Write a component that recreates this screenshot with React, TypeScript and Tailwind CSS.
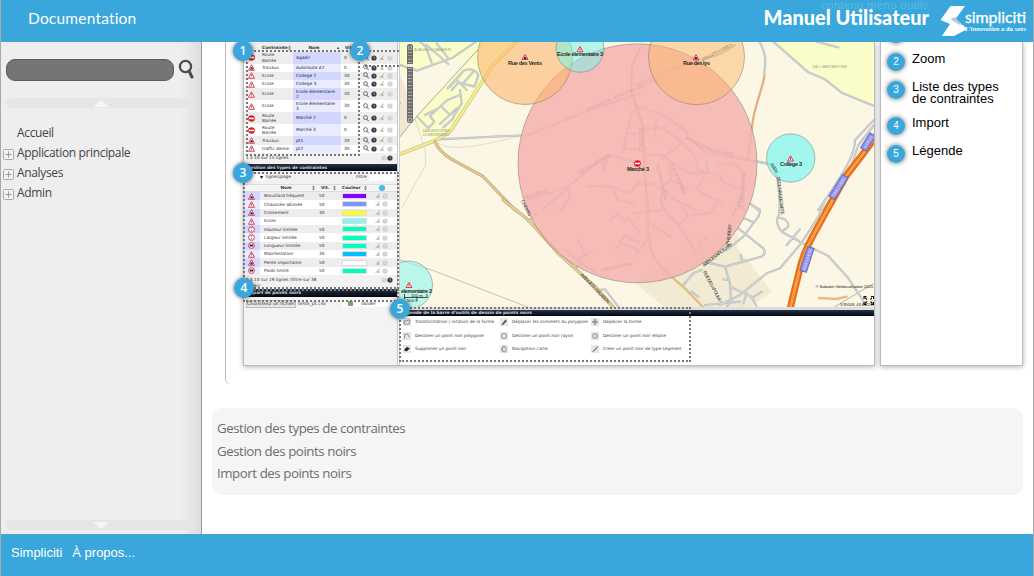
import React from "react";

type Kind = "stop" | "work" | "warn" | "limit" | "weight";

function SignIcon({ kind }: { kind: Kind }) {
  if (kind === "stop")
    return (
      <svg width="7" height="7" viewBox="0 0 14 14" className="shrink-0">
        <circle cx="7" cy="7" r="6.6" fill="#dc1c26" />
        <rect x="2" y="5.4" width="10" height="3" fill="#fff" />
      </svg>
    );
  if (kind === "limit" || kind === "weight")
    return (
      <svg width="7" height="7" viewBox="0 0 14 14" className="shrink-0">
        <circle cx="7" cy="7" r="5.8" fill="#fff" stroke="#d8283c" strokeWidth="1.8" />
        {kind === "limit" ? (
          <path d="M5 3.5h4L7 5.6zM5 10.5h4L7 8.4z" fill="#333" />
        ) : (
          <path d="M3.5 5h7v4h-7z" fill="#333" />
        )}
      </svg>
    );
  return (
    <svg width="7" height="7" viewBox="0 0 14 14" className="shrink-0">
      <path d="M7 1.4 13 12.6H1z" fill="#fff" stroke="#d8283c" strokeWidth="1.7" strokeLinejoin="round" />
      {kind === "work" ? <path d="M4.4 11 6 6l3 1.6 1 3.4z" fill="#222" /> : <path d="M7 5v3.6M7 9.6v1.4" stroke="#a02030" strokeWidth="1.5" />}
    </svg>
  );
}

function Gear({ dark }: { dark?: boolean }) {
  return (
    <svg width="6" height="6" viewBox="0 0 12 12" className="shrink-0">
      <circle cx="6" cy="6" r="5.2" fill={dark ? "#3c3c3c" : "#cfcfcf"} />
      <path d="M6 2.6V6l2.4 1.5" fill="none" stroke={dark ? "#bbb" : "#f4f4f4"} strokeWidth="1.3" />
    </svg>
  );
}

function Pen() {
  return (
    <svg width="6" height="6" viewBox="0 0 12 12" className="shrink-0">
      <path d="M9 1 5 7" stroke="#d9ad55" strokeWidth="2" />
      <path d="M1 9.5c3-4 5 1 9-2M6 5v5" stroke="#9b9b9b" strokeWidth="1.4" fill="none" />
    </svg>
  );
}

function Loupe() {
  return (
    <svg width="6" height="7" viewBox="0 0 12 14" className="shrink-0">
      <circle cx="5" cy="5.2" r="3.9" fill="none" stroke="#444" strokeWidth="1.5" />
      <path d="m8 8.5 3.4 4" stroke="#444" strokeWidth="2" />
    </svg>
  );
}

function Sort() {
  return (
    <svg width="3" height="6" viewBox="0 0 6 12" className="shrink-0">
      <path d="M3 1 5.6 5H.4zM3 11 .4 7h5.2z" fill="#666" />
    </svg>
  );
}

function BlackBar({ children }: { children: React.ReactNode }) {
  return (
    <div className="h-[7.5px] shrink-0 overflow-hidden bg-linear-to-b from-[#27344a] to-[#03070f] pl-[3px] text-[4.3px] leading-[7px] font-bold whitespace-nowrap text-[#d4d4d8]">
      {children}
    </div>
  );
}

const constraints: { k: Kind; c: string; n: string; v: string; tall?: boolean }[] = [
  { k: "stop", c: "Route Barrée", n: "Agadir", v: "0", tall: true },
  { k: "work", c: "Travaux", n: "Autoroute A7", v: "0" },
  { k: "warn", c: "Ecole", n: "College 2", v: "30" },
  { k: "warn", c: "Ecole", n: "College 3", v: "30" },
  { k: "warn", c: "Ecole", n: "Ecole élementaire 2", v: "30", tall: true },
  { k: "warn", c: "Ecole", n: "Ecole élementaire 3", v: "30", tall: true },
  { k: "stop", c: "Route Barrée", n: "Marché 2", v: "0", tall: true },
  { k: "stop", c: "Route Barrée", n: "Marché 3", v: "0", tall: true },
  { k: "work", c: "Travaux", n: "pt1", v: "30" },
  { k: "warn", c: "traffic dense", n: "pt2", v: "30" },
];

const types: { k: Kind; n: string; v: string; color: string }[] = [
  { k: "work", n: "Brouillard fréquent", v: "50", color: "bg-[#8400ff]" },
  { k: "warn", n: "Chaussée abîmée", v: "50", color: "bg-[#8494ff]" },
  { k: "work", n: "Croisement", v: "30", color: "bg-[#f8ff24]" },
  { k: "warn", n: "Ecole", v: "", color: "bg-[#84f7f1]" },
  { k: "limit", n: "Hauteur limitée", v: "50", color: "bg-[#00ffbf]" },
  { k: "limit", n: "Largeur limitée", v: "50", color: "bg-[#00ffbf]" },
  { k: "weight", n: "Longueur limitée", v: "50", color: "bg-[#00ffbf]" },
  { k: "warn", n: "Manifestation", v: "30", color: "bg-[#00bfff]" },
  { k: "work", n: "Pente importante", v: "50", color: "bg-white" },
  { k: "weight", n: "Poids limité", v: "50", color: "bg-[#00ffbf]" },
];

function Tables() {
  return (
    <div className="flex h-[323px] w-[154px] shrink-0 flex-col overflow-hidden border-r border-[#c4c4c4] bg-[#f3f3f3] font-['DejaVu_Sans',sans-serif] text-[4.3px] leading-[5.6px] text-[#333]">
      <div className="flex h-[9.5px] shrink-0 items-center bg-[#efefef] pt-[2px] font-bold">
        <span className="w-[18px]" />
        <span className="w-[26px]">Contrainte</span>
        <Sort />
        <span className="w-[46px] text-center">Nom</span>
        <span className="w-[8px]">▴</span>
        <span>Vit.</span>
      </div>
      {constraints.map((r, i) => (
        <div key={i} className={`flex shrink-0 items-center ${r.tall ? "h-[12px]" : "h-[8.25px]"} ${i % 2 ? "bg-white" : "bg-[#ededed]"}`}>
          <span className="flex w-[18px] pl-[4px]"><SignIcon kind={r.k} /></span>
          <span className="w-[31px] pr-[1px]"><span className={`block ${r.c === "Route Barrée" ? "w-[16px]" : "whitespace-nowrap"}`}>{r.c}</span></span>
          <span className={`flex h-full w-[48px] items-center pl-[3px] text-[#223] ${i % 2 ? "bg-[#eaebff]" : "bg-[#d3d6ff]"}`}>
            <span className="block w-[42px]">{r.n}</span>
          </span>
          <span className="w-[22px] pl-[3px]">{r.v}</span>
          <span className="flex items-center gap-[2px]"><Loupe /><Gear dark /><Pen /><Gear /></span>
        </div>
      ))}
      <div className="flex h-[10.75px] shrink-0 items-center justify-between bg-[#f1f1f1] pr-[4px] pl-[2px]">
        <span>1 à 10 sur 15 lignes</span>
        <span className="flex"><Gear /><Gear dark /></span>
      </div>
      <BlackBar>Gestion des types de contraintes</BlackBar>
      <div className="flex h-[12.5px] shrink-0 items-center bg-[#f1f1f1]">
        <span className="flex h-[7px] w-[21px] items-center justify-end bg-white pr-[2px] text-[6px] text-black">▾</span>
        <span className="ml-[1px] w-[90px]">lignes/page</span>
        <span className="w-[13px]">Filtre</span>
        <span className="h-[7px] w-[26px] bg-white" />
      </div>
      <div className="flex h-[8.5px] shrink-0 items-center border-y-[0.5px] border-[#ddd] bg-[#f4f4f4] font-bold">
        <span className="w-[16px]" />
        <span className="w-[52px] text-center">Nom</span>
        <Sort />
        <span className="ml-[6px] w-[12px]">Vit.</span>
        <Sort />
        <span className="ml-[6px] w-[22px]">Couleur</span>
        <Sort />
        <span className="ml-[12px] size-[6px] rounded-full bg-[#49bddf]" />
      </div>
      {types.map((r, i) => (
        <div key={r.n} className={`flex h-[8.3px] shrink-0 items-center ${i % 2 ? "bg-white" : "bg-[#ededed]"}`}>
          <span className={`flex h-full w-[16px] items-center pl-[4px] ${i % 2 ? "bg-[#eaebff]" : "bg-[#d3d6ff]"}`}><SignIcon kind={r.k} /></span>
          <span className="w-[59px] pl-[4px] whitespace-nowrap">{r.n}</span>
          <span className="w-[23px]">{r.v}</span>
          <span className={`h-[6px] w-[25px] border-[0.5px] border-[#ddd] ${r.color}`} />
          <span className="ml-[8px] flex gap-[1px]"><Pen /><Gear /></span>
        </div>
      ))}
      <div className="flex h-[14.5px] shrink-0 items-start justify-between bg-[#f1f1f1] pt-[2px] pr-[4px] pl-[2px]">
        <span className="w-[75px]">1 à 10 sur 19 lignes (filtre sur 38 lignes)</span>
        <span className="flex"><Gear /><Gear dark /></span>
      </div>
      <BlackBar>Import de points noirs</BlackBar>
      <div className="flex h-[13px] shrink-0 items-center pt-[1px]">
        <span className="ml-[2px] w-[50px] border-[0.5px] border-[#bbb] bg-[#e7e7e7] text-[4.7px] whitespace-nowrap">Choisissez un fichier</span>
        <span className="w-[47px] pl-[2px] text-[4.7px]">tests_pt.csv</span>
        <span className="flex h-[7px] w-[50px] items-center bg-white pl-[5px]">
          <span className="mr-[8px] size-[5px] bg-[#77a86e]" />Valider
        </span>
      </div>
    </div>
  );
}

const T = "translate(395 40) scale(.33333)";
const B = "translate(395 200) scale(.33333)";
const C = "translate(635 40) scale(.33333)";
const D = "translate(635 200) scale(.33333)";

const localRoads = [
  { t: T, d: "M0 70 65 92 170 55 250 0M110 68 92 20 75 5M95 15 160 72M125 10 160 55M15 190 0 165" },
  { t: T, d: "M158 145 205 92C225 82 248 92 250 108L238 140 190 128 170 150M165 140 200 100M185 120 215 150M200 135 235 95M68 232 100 265 118 245 105 228 157 180 195 165M90 225 125 208M195 150 200 190 175 230M140 200 165 225M135 252 185 205M145 262 175 235" },
  { t: T, d: "M130 298 380 286 400 285 570 215 735 160M735 208 710 212 685 330M695 278 720 282M690 325 725 328M620 375 640 345 625 395M395 480 430 470 520 440 590 380 640 345 735 370M440 510 520 445M520 445 525 475 495 510M580 438 650 440 700 460 735 425M650 440 670 480 715 490" },
  { t: B, d: "M510 150 580 205 600 215M545 180 570 160 550 120M590 155 545 185M645 60 670 40 690 65M665 145 690 105 735 130M700 55 735 95M670 125 730 150M610 270 630 268 670 320M540 205 560 190M400 65 425 40" },
  { t: C, d: "M0 135 95 95 260 40 300 15M0 195 85 225 150 270 170 300 215 340 335 358 400 372M30 265 85 265 140 305 180 345 190 390 250 405M65 235 60 290M80 355 140 310M35 345 80 345 145 390 175 400M100 370 110 420 80 440 110 475 185 510M110 420 160 445M250 375 300 370 325 400M180 400 220 400 215 365M210 405 185 450 260 490M250 405 270 430 320 445M325 400 325 510M0 435 50 430 80 450 80 510M345 490 375 510M545 5 610 22" },
  { t: D, d: "M75 0 90 30 130 75 170 135 185 165M0 40 75 30M45 70 105 110M130 75 160 45 140 20M170 45 225 40 250 0M190 130 220 110M50 100 0 170M350 15 375 35 370 50 325 110 275 150M328 55 358 68M310 85 385 145Q395 160 380 170L270 200 205 185M275 150 280 145M317 165 322 185M270 200 285 250 288 305 275 320M265 238 280 240M145 255 175 220 200 210M170 275 190 290M285 260 350 290 365 320M325 310 335 280M350 295 380 275M250 290 262 310 315 305M210 315 260 310" },
];

const outerRoads = [
  { t: C, d: "M370 0C405 55 385 85 388 110M415 5 520 97 570 118 620 158 717 198M717 240 660 300C660 340 640 380 550 510M717 255 670 315 650 375 565 510M365 365 400 370C435 395 428 440 437 510" },
  { t: D, d: "M435 0 432 45C420 60 425 75 440 95L500 128 580 168 640 235 690 310M428 52C455 55 462 70 460 80L440 95M570 0 550 50 500 128 435 205 395 220 315 285 255 315M455 135 495 88M475 110 500 130" },
];

function MapView() {
  return (
    <svg width="474" height="265" viewBox="400 42 474 265" className="block shrink-0" fontFamily="Liberation Sans, Arial, sans-serif">
      <rect x="400" y="42" width="474" height="265" fill="#fcf6e4" />
      <path transform={T} d="M15 5H360L265 120 165 275 120 300 85 280 60 230 240 35 230 45 60 95H15z" fill="#fbfdc8" />
      <path transform={T} d="M15 100 45 190V250L15 290z" fill="#f2e8d1" />
      <path transform={C} d="M420 5H717V198L620 158 570 118 520 97z" fill="#fbfdc8" />
      <path transform={D} d="M0 250 200 130 310 100 305 140 410 275 345 322H90z" fill="#f3ead3" />
      <g fill="none" strokeLinecap="round" strokeLinejoin="round">
        <path transform={T} d="M15 290 60 235 248 30" stroke="#aaa994" strokeWidth="3" />
        <path transform={T} d="M60 235 90 330 92 375 20 505M130 310C170 335 250 320 380 286" stroke="#e5dcc5" strokeWidth="3" />
        <path transform={B} d="M15 180 110 210 400 322" stroke="#c8c2b0" strokeWidth="3" />
        <path transform={D} d="M717 250 600 320" stroke="#b8b5a5" strokeWidth="3" />
        {[...localRoads, ...outerRoads].map((r, i) => (
          <path key={i} transform={r.t} d={r.d} stroke="#b9bdc0" strokeWidth="6.6" />
        ))}
        {[...localRoads, ...outerRoads].map((r, i) => (
          <path key={i} transform={r.t} d={r.d} stroke="#d0d4d6" strokeWidth="3.2" />
        ))}
        <g transform={T}>
          <path d="M15 342 120 302 165 275 265 120 290 80 365 5" stroke="#c9c387" strokeWidth="11" />
          <path d="M15 342 120 302 165 275 265 120 290 80 365 5" stroke="#f7ec8d" strokeWidth="7" />
          <path d="M120 305C130 330 150 345 165 355L265 410 360 510" stroke="#b8a67d" strokeWidth="9" />
          <path d="M120 305C130 330 150 345 165 355L265 410 360 510" stroke="#e8c98d" strokeWidth="5" />
          <path d="M735 25 710 80V160L735 240" stroke="#e3ad80" strokeWidth="6" />
        </g>
        <path transform={B} d="M325 0 400 60 490 160 600 260 655 322" stroke="#b8a67d" strokeWidth="10" />
        <path transform={B} d="M325 0 400 60 490 160 600 260 655 322" stroke="#ead095" strokeWidth="6" />
        <path transform={C} d="M388 110C378 160 355 210 352 255L338 360M0 180 25 265 30 400 38 510" stroke="#e4b184" strokeWidth="7" />
        <path transform={D} d="M38 0C35 60 38 110 50 160 70 200 115 235 150 265L205 322M552 294 605 297 635 290" stroke="#e2bd86" strokeWidth="7" />
        <path d="M880 131 866 150 846 176 827 210C816 231 805 247 800 268L790 309" stroke="#e77117" strokeWidth="7" />
        <path d="M880 131 866 150 846 176 827 210C816 231 805 247 800 268L790 309" stroke="#ffc590" strokeWidth="2" />
        <path d="M880 131 866 150 846 176 827 210C816 231 805 247 800 268L790 309" stroke="#ff7600" strokeWidth=".8" />
      </g>
      <g fontSize="4.6" fill="#625b5d" letterSpacing=".2">
        <text transform="translate(587 111) rotate(-23)">CHEMIN DE MONTPELLIER A NIMES</text>
        <text transform="translate(578 175) rotate(-30)" textLength="38">RUE PAUL CEZANNE</text>
        <text transform="translate(525 199) rotate(-18)" textLength="24">RD EUTRELO</text>
        <text transform="translate(685 139) rotate(26)" textLength="33">AVENUE DU MAS</text>
        <text transform="translate(715.5 153) rotate(10)" textLength="19">DE SAPTE</text>
        <text transform="translate(703 61) rotate(-27)" textLength="34">PELLIER A NIMES</text>
        <text transform="translate(601 272) rotate(-13)" textLength="32">AVENUE DU MAS</text>
        <text transform="translate(643 152) rotate(-90)">CONSERIE</text>
        <text transform="translate(656 165) rotate(76)" textLength="38">RUE MARC CHAGALL</text>
        <text transform="translate(670 164) rotate(66)" textLength="34">RUE LOUIS FRABLE</text>
        <text transform="translate(741 209) rotate(-82)" textLength="37">BETHENCOURT CHE</text>
        <text transform="translate(734 217) rotate(-66)">RUE DES</text>
      </g>
      <g stroke="#6c6e60" strokeOpacity=".75" strokeWidth=".6">
        <circle cx="637.5" cy="163.3" r="119.5" fill="#f4b2af" fillOpacity=".84" />
        <circle cx="525" cy="57" r="47.5" fill="#fcb76c" fillOpacity=".58" />
        <circle cx="696.5" cy="56.7" r="48" fill="#fcb76c" fillOpacity=".5" />
        <circle cx="580" cy="48.3" r="24" fill="#73f4ea" fillOpacity=".52" />
        <circle cx="790.7" cy="158" r="24.2" fill="#83f5f1" fillOpacity=".74" />
        <circle cx="408.5" cy="285" r="24" fill="#8ff6ef" fillOpacity=".6" />
      </g>
      <g fontSize="4.6" fill="#333">
        <text transform="translate(704 267) rotate(-38)" textLength="36">AVENUE MARCEL PAN</text>
        <text transform="translate(729 245) rotate(-82)" textLength="21">PHILIBERT</text>
        <text transform="translate(703 272) rotate(62)" textLength="33">RUE DE LA POULA</text>
        <text transform="translate(580 275) rotate(46)" textLength="40">AVENUE DU SALAISON</text>
        <text transform="translate(521 201) rotate(64)" textLength="17">CHEMIN</text>
        <text transform="translate(770 164) rotate(58)" textLength="11">AVEN</text>
        <text transform="translate(777 177) rotate(84)" textLength="38">UE DU MAS DE SAPTE</text>
      </g>
      <g fill="#a6a687" fontSize="3.9">
        <text x="414" y="51" textLength="37">A VALLEE DU SALAISON</text>
        <text x="422" y="132" textLength="28">Z.A.E LES PORTES</text>
        <text x="423" y="136" textLength="26">DOMNITIENNES</text>
        <text x="812" y="68" textLength="35">Z.A.C. SAINT-ANTOINE</text>
      </g>
      <g fontSize="4.2" fill="#e8eaff">
        {[[868, 142, -58, 18], [838.5, 187, -58, 26], [807, 259.5, -72, 25]].map(([x, y, a, w]) => (
          <g key={y} transform={`translate(${x} ${y}) rotate(${a})`}>
            <rect x={-w / 2} y="-3.4" width={w} height="6.800" fill="#8d8ee4" stroke="#5257c5" strokeWidth=".7" />
            <text y="1.6" textAnchor="middle">{w > 20 ? "A9/E15/E80" : "A9/E15"}</text>
          </g>
        ))}
      </g>
      <g>
        {[[525, 57, 1], [580, 49.3, 0], [696, 57.3, 1], [790.5, 158.5, 0], [409, 285, 0]].map(([x, y, w]) => (
          <g key={x} transform={`translate(${x} ${y})`}>
            <path d="M0-2.7 3 2.5H-3z" fill="#fff" stroke="#d8283c" strokeWidth=".9" />
            {w ? <path d="M-1.5 2-.6-.6 1 .2 1.6 2z" fill="#222" /> : <path d="M0-1V1.7" stroke="#a02030" strokeWidth=".8" />}
          </g>
        ))}
        <circle cx="637.5" cy="163.5" r="3.3" fill="#e01b2c" />
        <rect x="635" y="162.7" width="5" height="1.5" fill="#fff" />
      </g>
      <g fontSize="5.6" fontWeight="bold" fill="#2b2b2b" textAnchor="middle">
        <text x="525" y="64.8" textLength="34">Rue des Vents</text>
        <text x="580" y="56.3" textLength="46">Ecole élementaire 3</text>
        <text x="696.5" y="64.8" textLength="27">Rue des lys</text>
        <text x="638" y="171" textLength="22">Marché 3</text>
        <text x="791" y="165.5" textLength="22">College 3</text>
        <text x="416.5" y="292.500" textLength="31">élementaire 2</text>
      </g>
      <path d="M404.500 294v5M404.500 297.500H427M427 294v4M417 297.500v3" stroke="#222" strokeWidth=".8" fill="none" />
      <g fontSize="4.2" fill="#222">
        <text x="411" y="296.700">100 m</text>
        <text x="407" y="301.700">500 ft</text>
        <text x="815.500" y="288" textLength="57.500">© Sabatier Géolocalisation 2015</text>
        <text x="840" y="306" textLength="33">3.95108, 43.64220</text>
      </g>
      <path d="M864 299v-2.500h2.500M871 296.500h2.500v2.500M864 302v2.500h2.500M871 304.500h2.500v-2.500M865 297.500l2 2M872.500 297.500l-2 2M865 303.500l2-2M872.500 303.500l-2-2" stroke="#111" strokeWidth="1.100" fill="none" />
      <rect x="407" y="44" width="6" height="79" rx="2.500" fill="#6d6d6d" />
      <path d="M410 52v12M410 68v50" stroke="#c2c2c2" strokeWidth="4" strokeDasharray=".7 2.700" />
      <circle cx="410" cy="48" r="1.800" fill="none" stroke="#ccc" strokeWidth=".8" />
      <circle cx="410" cy="120" r="1.800" fill="none" stroke="#ccc" strokeWidth=".8" />
      <rect x="407" y="64" width="6.500" height="3" rx="1" fill="#eee" />
    </svg>
  );
}

const toolRows = [
  ["Transformation / rotation de la forme", "Déplacer les sommets du polygone", "Déplacer la forme"],
  ["Dessiner un point noir polygone", "Dessiner un point noir rayon", "Dessiner un point noir ellipse"],
  ["Supprimer un point noir", "Navigation carte", "Créer un point noir de type segment"],
];
const toolPaths = [
  ["M2 6h6l1-2h5l-2 8H2z", "M4 13 11 4l2 2-8 8z", "M8 3v10M3 8h10M6 4h4M6 12h4M4 6v4M12 6v4"],
  ["M3 13V5l6-1 4 7", "M8 3a5 5 0 1 0 .1 0z", "M5 4h6l2 4-2 4H5L3 8z"],
  ["M3 9 8 4l5 3-5 5H4z", "M5 13 3 8l2 1V4h2V3h2v1h2v1l1 1v5l-2 3z", "M3 13 13 3M4 14 14 4"],
];

function Toolbar() {
  return (
    <div className="flex h-[58px] w-[474px] flex-col bg-white font-['DejaVu_Sans',sans-serif] text-[4.3px] text-[#444]">
      <div className="h-[2.500px] shrink-0 bg-[#ddd]" />
      <div className="h-[6px] shrink-0 bg-linear-to-b from-[#27344a] to-[#03070f] pl-px text-[4.300px] leading-[6px] font-bold text-[#d4d4d8]">
        Légende de la barre d’outils de dessin de points noirs
      </div>
      {toolRows.map((row, i) => (
        <div key={i} className="flex h-[13.500px] items-center pl-[3px]">
          {row.map((label, j) => (
            <div key={label} className={`flex items-center gap-[4px] whitespace-nowrap ${j < 2 ? (j ? "w-[91px]" : "w-[97px]") : ""}`}>
              <svg width="8" height="8" viewBox="0 0 16 16">
                <rect width="16" height="16" fill="#e6e6e6" />
                <path d={toolPaths[i][j]} fill={(i === 2 && j === 0) || (i === 0 && j === 1) ? "#222" : "none"} stroke="#555" strokeWidth="1.200" />
              </svg>
              {label}
            </div>
          ))}
        </div>
      ))}
    </div>
  );
}

function Marker({ n, className }: { n: number; className: string }) {
  return (
    <span className={`absolute flex size-[20px] items-center justify-center rounded-full bg-[#39a7db] font-['Open_Sans',sans-serif] text-[12px] leading-none font-semibold text-white shadow-[0_0_4px_rgba(0,0,0,.6)] ${className}`}>
      {n}
    </span>
  );
}

const legend = [
  { n: 2, text: ["Zoom"], h: "h-[28px]" },
  { n: 3, text: ["Liste des types", "de contraintes"], h: "h-[36px]" },
  { n: 4, text: ["Import"], h: "h-[28px]" },
  { n: 5, text: ["Légende"], h: "h-[28px]" },
];

function Badge({ n }: { n: number }) {
  return (
    <span className="flex size-[18px] shrink-0 items-center justify-center rounded-full bg-[#39a7db] pb-px text-[10px] leading-none text-white shadow-[0_0_4px_1px_rgba(0,0,0,.4)]">
      {n}
    </span>
  );
}

function Sidebar() {
  return (
    <aside className="flex w-[201px] shrink-0 flex-col border-r border-[#999] bg-[linear-gradient(to_right,#eee_0,#eee_176px,#ebebeb_185px,#dcdcdc_200px)] pt-[17px] pl-[5px]">
      <div className="flex items-start">
        <div className="h-[22px] w-[168px] rounded-[9px] border border-[#5d5d5d] bg-[#757575]" />
        <svg width="16" height="20" viewBox="0 0 16 20" className="ml-[4px]">
          <circle cx="7.500" cy="7.500" r="5.600" fill="none" stroke="#4b4b4b" strokeWidth="2.300" />
          <path d="m11 12 3 6" stroke="#4b4b4b" strokeWidth="3" strokeLinecap="round" />
        </svg>
      </div>
      <div className="mt-[17px] flex h-[10px] w-[190px] items-center justify-center rounded-full bg-[#e6e6e6]">
        <svg width="16" height="7" viewBox="0 0 16 7"><path d="M8 0 16 7H0z" fill="#f6f6f6" /></svg>
      </div>
      <nav className="mt-[15px] -ml-[3px] font-['Open_Sans',sans-serif] text-[12px] leading-[20px] text-[#444]">
        {["Accueil", "Application principale", "Analyses", "Admin"].map((item, i) => (
          <div key={item} className="flex h-[20px] items-center">
            <span className="flex w-[14px] pt-[2px]">
              {i > 0 && (
                <svg width="11" height="11" viewBox="0 0 11 11">
                  <rect x=".5" y=".5" width="10" height="10" rx="1" fill="#f2f2f2" stroke="#aaa" />
                  <path d="M5.500 2.500v6M2.500 5.500h6" stroke="#999" />
                </svg>
              )}
            </span>
            <span className="tracking-[-0.35px]">{item}</span>
          </div>
        ))}
      </nav>
      <div className="mt-auto mb-[4px] flex h-[10px] w-[190px] items-center justify-center rounded-full bg-[#e6e6e6]">
        <svg width="16" height="7" viewBox="0 0 16 7"><path d="M8 7 16 0H0z" fill="#f6f6f6" /></svg>
      </div>
    </aside>
  );
}

export default function App() {
  return (
    <div className="relative flex h-[576px] w-[1034px] flex-col overflow-hidden border-x border-[#aaa] bg-white font-['Liberation_Sans',Arial,sans-serif]">
      <header className="flex h-[42px] shrink-0 items-center bg-[#39a7db] pl-[27px] text-white">
        <h1 className="flex-1 pb-[5px] font-['Lato',sans-serif] text-[15.500px] font-normal tracking-[0.2px]">Documentation</h1>
        <div className="pb-[6px] font-['Lato',sans-serif] text-[19.900px] font-black whitespace-nowrap">Manuel Utilisateur</div>
        <svg width="95" height="42" viewBox="0 0 95 42" className="ml-[9px] shrink-0">
          <path d="M12.500 6H27L17.500 19 29.500 29 16 36H4L12 24 2.500 20z" fill="#fff" />
          <path d="m16.500 17 8 8-3.500-.5-8.500-5z" fill="#b3cadb" />
          <text x="27" y="23" fontFamily="Lato" fontSize="16" fill="#fff" stroke="#fff" strokeWidth=".3" textLength="61">simpliciti</text>
          <text x="27" y="31" fontFamily="Liberation Serif" fontSize="6" fontStyle="italic" fontWeight="bold" fill="#fff" textLength="61">L’innovation a du sens</text>
        </svg>
      </header>
      <div className="absolute top-[-4px] left-[820px] text-[11.500px] leading-[18px] tracking-[0.25px] whitespace-nowrap text-white/20">contenu menu outils</div>

      <div className="flex h-[492px] shrink-0">
        <Sidebar />
        <main className="min-w-0 flex-1 overflow-hidden pl-[10px]">
          <div className="flex h-[343px]">
            <div className="h-[342px] w-[17px] shrink-0 pl-[13px]">
              <div className="h-full w-[5px] rounded-bl-[5px] border-b border-l border-[#bbb] [mask-image:linear-gradient(to_right,black,black_60%,transparent)]" />
            </div>
            <div className="relative ml-[14px] h-[324px] w-[632px] shrink-0 border-r border-b border-l border-[#bbb] bg-white shadow-[0_1px_5px_rgba(0,0,0,.3)]">
              <div className="flex">
                <Tables />
                <div className="w-[2px] shrink-0 bg-white pl-[1px]"><div className="h-full w-px bg-[#ccc]" /></div>
                <div className="w-[474px]"><MapView /><Toolbar /></div>
              </div>
              <div className="absolute top-[8px] left-[2px] h-[106px] w-[114px] border-2 border-dotted border-[#777]" />
              <div className="absolute top-[8px] left-[121px] h-[17px] w-[34px] border-y-2 border-dotted border-[#777]" />
              <div className="absolute top-[130px] -left-px h-[117px] w-[156px] border-2 border-dotted border-[#777]" />
              <div className="absolute top-[247px] -left-px h-[13px] w-[156px] border-2 border-dotted border-[#777]" />
              <div className="absolute top-[265px] left-[155px] h-[55px] w-[292px] border-2 border-dotted border-[#777]" />
              <Marker n={1} className="top-[-1px] -left-[11px]" />
              <Marker n={2} className="top-[-1px] left-[106px]" />
              <Marker n={3} className="top-[121px] -left-[11px]" />
              <Marker n={4} className="top-[236px] -left-[10px]" />
              <Marker n={5} className="top-[257px] left-[146px]" />
            </div>
            <div className="ml-[5px] h-[324px] w-[143px] shrink-0 border-x border-b border-[#bbb] bg-white pl-[6px] shadow-[0_1px_5px_rgba(0,0,0,.3)]">
              <div className="h-[11px]"><div className="-translate-y-[17px]"><Badge n={1} /></div></div>
              {legend.map((l) => (
                <div key={l.n} className={`flex items-start gap-[7px] ${l.h}`}>
                  <Badge n={l.n} />
                  <div className="text-[13px] leading-[12px] whitespace-nowrap text-black">
                    {l.text.map((t) => <div key={t}>{t}</div>)}
                  </div>
                </div>
              ))}
            </div>
          </div>
          <div className="mt-[23px] h-[87px] w-[811px] rounded-[10px] bg-[#f5f5f5] pt-[9px] pl-[5px] font-['Open_Sans',sans-serif] text-[13.300px] leading-[22.500px] tracking-[-0.450px] text-[#6d6d6d]">
            <div>Gestion des types de contraintes</div>
            <div>Gestion des points noirs</div>
            <div>Import des points noirs</div>
          </div>
        </main>
      </div>
      <footer className="flex h-[42px] shrink-0 items-start gap-[10px] bg-[#39a7db] pt-[10px] pl-[10px] text-[13px] leading-[17px] text-white">
        <span>Simpliciti</span>
        <span>À propos...</span>
      </footer>
    </div>
  );
}
